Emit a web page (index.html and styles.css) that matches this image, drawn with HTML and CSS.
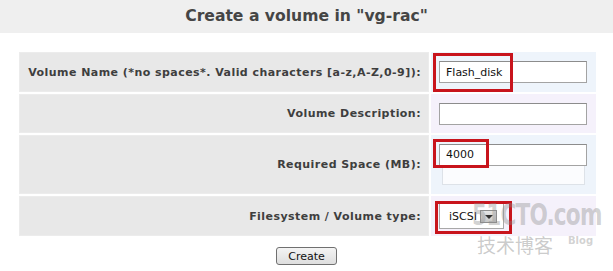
FILE: index.html
```html
<!DOCTYPE html>
<html lang="en">
<head>
    <meta charset="UTF-8">
    <meta name="viewport" content="width=device-width, initial-scale=1.0">
    <title>Create a volume</title>
    <link rel="stylesheet" href="styles.css">
</head>
<body>
    <h2 class="page-title">Create a volume in "vg-rac"</h2>

    <form class="volume-form">
        <div class="form-grid">
            <div class="label-cell">Volume Name (*no spaces*. Valid characters [a-z,A-Z,0-9]):</div>
            <div class="value-cell odd">
                <input type="text" class="text-input" value="Flash_disk">
                <span class="mark mark-name"></span>
            </div>

            <div class="label-cell">Volume Description:</div>
            <div class="value-cell even">
                <input type="text" class="text-input" value="">
            </div>

            <div class="label-cell">Required Space (MB):</div>
            <div class="value-cell odd">
                <div class="stack">
                    <input type="text" class="text-input" value="4000">
                    <div class="slider-box"></div>
                </div>
                <span class="mark mark-size"></span>
            </div>

            <div class="label-cell">Filesystem / Volume type:</div>
            <div class="value-cell even">
                <div class="fake-select">
                    <span class="select-text">iSCSI</span>
                    <span class="select-arrow"></span>
                </div>
                <span class="mark mark-type"></span>
            </div>
        </div>

        <div class="actions">
            <button type="button" class="btn-create">Create</button>
        </div>
    </form>

    <div class="watermark">
        <span class="wm-site">51CTO.com</span>
        <span class="wm-cn">技术博客</span>
        <span class="wm-blog">Blog</span>
    </div>
</body>
</html>
```

FILE: styles.css
```css
* {
    margin: 0;
    padding: 0;
    box-sizing: border-box;
}

body {
    font-family: 'DejaVu Sans', Verdana, sans-serif;
    background-color: #fff;
    color: #3c3c3c;
    width: 613px;
    height: 271px;
    position: relative;
    overflow: hidden;
}

.page-title {
    height: 33px;
    line-height: 33px;
    background-color: #efefef;
    text-align: center;
    font-size: 15.6px;
    font-weight: bold;
    color: #454545;
}

.volume-form {
    padding: 19px 0 0 19px;
}

.form-grid {
    display: grid;
    grid-template-columns: 410px 165px;
    grid-template-rows: 40px 39px 59px 40px;
    gap: 2px;
}

.label-cell {
    background-color: #e8e8e8;
    border: 1px solid #ececec;
    display: flex;
    align-items: center;
    justify-content: flex-end;
    padding-right: 7px;
    font-size: 11px;
    letter-spacing: 0.45px;
    font-weight: bold;
    color: #3e3e3e;
    white-space: nowrap;
}

.value-cell {
    position: relative;
    display: flex;
    align-items: center;
    padding-left: 8px;
}

.value-cell.odd {
    background-color: #eef4fb;
}

.value-cell.even {
    background-color: #f5f1fb;
}

.text-input {
    width: 148px;
    height: 22px;
    border: 1px solid #a3a3a3;
    border-top-color: #8c8c8c;
    background-color: #fff;
    padding: 0 6px;
    font-family: 'DejaVu Sans', Verdana, sans-serif;
    font-size: 11px;
    color: #111;
    outline: none;
}

.stack {
    display: flex;
    flex-direction: column;
    margin-top: -1px;
}

.slider-box {
    width: 143px;
    height: 19px;
    margin-left: 3px;
    border: 1px solid #dde2e8;
    border-top: none;
    background-color: #fbfcfe;
}

.fake-select {
    width: 65px;
    height: 26px;
    border: 1px solid #a8a8a8;
    background-color: #fff;
    display: flex;
    align-items: center;
    padding-left: 9px;
    gap: 3px;
    font-size: 11px;
    color: #111;
}

.select-arrow {
    position: relative;
    width: 17px;
    height: 13px;
    border: 1px solid #8e8e8e;
    background: linear-gradient(#e6e6e6, #c9c9c9);
}

.select-arrow::after {
    content: "";
    position: absolute;
    left: 4px;
    top: 4px;
    border-left: 4px solid transparent;
    border-right: 4px solid transparent;
    border-top: 4px solid #333;
}

.mark {
    position: absolute;
    border: 3px solid #c8141c;
    pointer-events: none;
}

.mark-name {
    left: 2px;
    top: 1px;
    width: 80px;
    height: 39px;
}

.mark-size {
    left: 2px;
    top: 4px;
    width: 56px;
    height: 29px;
}

.mark-type {
    left: 4px;
    top: 5px;
    width: 77px;
    height: 33px;
}

.actions {
    display: flex;
    justify-content: center;
    padding: 11px 19px 0 0;
}

.btn-create {
    width: 61px;
    height: 18px;
    border: 1px solid #707070;
    border-radius: 3px;
    background: linear-gradient(#f4f4f4, #dedede);
    font-family: 'DejaVu Sans', Verdana, sans-serif;
    font-size: 11px;
    color: #111;
}

.watermark {
    position: absolute;
    left: 472px;
    top: 197px;
    width: 135px;
    height: 70px;
    color: rgba(140, 140, 140, 0.4);
    pointer-events: none;
}

.wm-site {
    position: absolute;
    left: 0;
    top: 0;
    font-family: 'DejaVu Sans Condensed', 'DejaVu Sans', sans-serif;
    font-weight: bold;
    font-size: 30px;
    letter-spacing: -1px;
    transform: scaleX(0.8);
    transform-origin: left top;
}

.wm-cn {
    position: absolute;
    left: 5px;
    top: 37px;
    font-family: 'Noto Sans CJK SC', sans-serif;
    font-size: 19px;
    line-height: 22px;
    color: rgba(140, 140, 140, 0.45);
}

.wm-blog {
    position: absolute;
    left: 96px;
    top: 38px;
    font-family: 'DejaVu Sans', sans-serif;
    font-weight: bold;
    font-size: 10px;
}
```
